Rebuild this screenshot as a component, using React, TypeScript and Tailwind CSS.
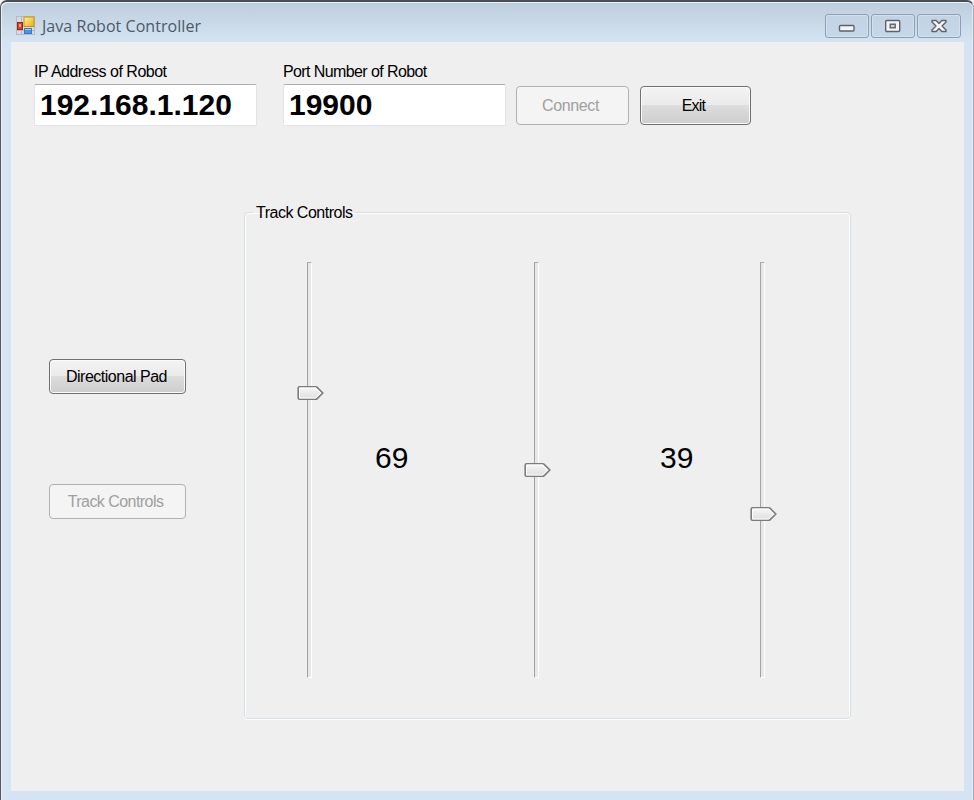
import type { ReactNode } from "react";

function FormIcon() {
  return (
    <svg width="20" height="20" viewBox="0 0 20 20" className="shrink-0">
      <defs>
        <linearGradient id="gold" x1="0" y1="0" x2="1" y2="1">
          <stop offset="0" stopColor="#fff0a0" />
          <stop offset="1" stopColor="#eeb000" />
        </linearGradient>
      </defs>
      <rect x="0.5" y="0.5" width="18" height="18" fill="#d5dae2" stroke="#b4bac6" />
      <path d="M5.5 1V18M1 14.5H18" stroke="#b4bac6" />
      <rect x="8" y="1" width="10" height="9.5" fill="url(#gold)" stroke="#c8930c" />
      <rect x="1.5" y="6.5" width="5" height="7" fill="#d8412e" stroke="#9c2418" />
      <rect x="3" y="8" width="2" height="3" fill="#f2a090" />
      <rect x="8.5" y="12.5" width="7" height="5" fill="#4c92e8" stroke="#3a78cc" />
      <path d="M9 13.5H15" stroke="#9cc8ff" />
    </svg>
  );
}

function CaptionButton({ label, children }: { label: string; children: ReactNode }) {
  return (
    <button
      aria-label={label}
      className="flex h-6 w-11 items-center justify-center rounded-[3px] border border-[#8b9fb9] bg-gradient-to-b from-[#c3d3e3] to-[#c6d7e9] shadow-[inset_0_0_0_1px_#d3e0ed]"
    >
      <svg width="20" height="16" viewBox="0 0 20 16" fill="#f5f5f5" stroke="#5d626c" strokeWidth="1.4">
        {children}
      </svg>
    </button>
  );
}

function Field({ label, value, labelClass }: { label: string; value: string; labelClass: string }) {
  return (
    <div className="w-[223px]">
      <div className={`h-[22px] text-base leading-5 whitespace-nowrap ${labelClass}`}>{label}</div>
      <div className="flex h-[42px] items-center rounded-[2px] border border-[#e2e3ea] border-t-[#abadb3] bg-white pl-[5px] text-[30px] leading-none font-bold">
        {value}
      </div>
    </div>
  );
}

function PushButton({ children, className, disabled }: { children: ReactNode; className: string; disabled?: boolean }) {
  const look = disabled
    ? "border-[#adb2b5] bg-[#f4f4f4] text-[#a0a0a0]"
    : "border-[#707070] bg-[linear-gradient(#f3f3f3_0%,#ebebeb_48%,#dddddd_50%,#cdcdcd_100%)] shadow-[inset_0_0_0_1px_#fbfbfb] text-black";
  return (
    <button disabled={disabled} className={`flex items-center justify-center rounded-[4px] border text-base whitespace-nowrap ${look} ${className}`}>
      {children}
    </button>
  );
}

function TrackBar({ thumbTop }: { thumbTop: number }) {
  return (
    <div className="relative h-[416px] w-[5px] shrink-0 border-t border-r border-b border-l-[1.5px] border-t-[#b0b0b0] border-r-white border-b-white border-l-[#a2a2a2] bg-[#e7e7e7]">
      <svg width="27" height="17" viewBox="0 0 27 17" className="absolute -left-[11px]" style={{ top: thumbTop }}>
        <defs>
          <linearGradient id="thumb" x1="0" y1="0" x2="0" y2="1">
            <stop offset="0" stopColor="#f8f8f8" />
            <stop offset="1" stopColor="#dddddd" />
          </linearGradient>
        </defs>
        <path d="M2.5 1.7H18.5Q19.5 1.7 20.2 2.4L25.8 8L20.2 13.6Q19.5 14.3 18.5 14.3H2.5Q1.2 14.3 1.2 13V3Q1.2 1.7 2.5 1.7Z" fill="url(#thumb)" stroke="#7c7c7c" strokeWidth="1.6" />
        <path d="M2.5 3H18.7L23.8 8L18.7 13H2.5Z" fill="none" stroke="#fff" />
      </svg>
    </div>
  );
}

export default function App() {
  return (
    <div className="h-[800px] w-[974px] bg-[#f4f4f4] font-['Liberation_Sans',Arial,sans-serif] text-black">
      <div className="flex h-[800px] flex-col rounded-t-[7px] border-t-2 border-r border-l border-t-[#4b4e54] border-r-[#a6abb8] border-l-[#53565c] bg-[linear-gradient(#bccddd_0px,#d5e4f2_40px,#d5e4f2_100%)] pr-[9px] pb-[9px] pl-[10px] shadow-[inset_1px_1px_0_#eaf0f6,inset_-1px_0_0_#e0e9f2]">
        <header className="flex h-10 shrink-0 items-start pr-[3px]">
          <div className="flex items-center gap-[6px] pt-[14px] pl-[5px]">
            <FormIcon />
            <h1 className="-mt-px font-['Open_Sans','Noto_Sans',sans-serif] text-base leading-5 tracking-[0.05px] text-[#4c5a68]">Java Robot Controller</h1>
          </div>
          <div className="mt-3 ml-auto flex gap-[2px]">
            <CaptionButton label="Minimize">
              <rect x="2.5" y="7.5" width="14.5" height="5.5" rx="1" />
            </CaptionButton>
            <CaptionButton label="Maximize">
              <rect x="2.7" y="2.5" width="14" height="11" rx="1" />
              <rect x="7.2" y="6.2" width="5" height="3.6" fill="#c4d5e6" />
            </CaptionButton>
            <CaptionButton label="Close">
              <path d="M3 2.5H7.2L10 5.5L12.8 2.5H17V4L13 8L17 12V13.5H12.8L10 10.5L7.2 13.5H3V12L7 8L3 4Z" strokeLinejoin="round" />
            </CaptionButton>
          </div>
        </header>

        <main className="flex-1 bg-[#efefef]">
          <div className="flex h-40 pt-5 pl-[23px]">
            <Field label="IP Address of Robot" value="192.168.1.120" labelClass="tracking-[-0.5px]" />
            <div className="ml-[26px] flex">
              <Field label="Port Number of Robot" value="19900" labelClass="tracking-[-0.6px]" />
            </div>
            <div className="ml-[10px] flex gap-[11px] pt-6">
              <PushButton disabled className="h-[39px] w-[113px] pr-1 tracking-[-0.35px]">Connect</PushButton>
              <PushButton className="h-[39px] w-[111px] pr-1 tracking-[-0.8px]">Exit</PushButton>
            </div>
          </div>

          <div className="flex pl-[38px]">
            <div className="flex w-[195px] flex-col gap-[90px] pt-[157px]">
              <PushButton className="h-[35px] w-[137px] pt-px pr-0.5 tracking-[-0.5px]">Directional Pad</PushButton>
              <PushButton disabled className="h-[35px] w-[137px] pt-px pr-1 tracking-[-0.55px]">Track Controls</PushButton>
            </div>
            <fieldset className="h-[517px] w-[607px] min-w-0 rounded-[4px] border border-[#d5dfe5] shadow-[inset_1px_0_0_#fff,inset_-1px_0_0_#fff,inset_0_1px_0_#fff,0_1px_0_#fff]">
              <legend className="ml-2 h-5 px-[3px] text-base leading-[22px] tracking-[-0.5px]">Track Controls</legend>
              <div className="flex pt-[40px] pl-[62px]">
                <TrackBar thumbTop={122} />
                <div className="w-[222px] pt-[180px] pl-[63px] text-[30px] leading-8">69</div>
                <TrackBar thumbTop={199} />
                <div className="w-[221px] pt-[180px] pl-[121px] text-[30px] leading-8">39</div>
                <TrackBar thumbTop={243} />
              </div>
            </fieldset>
          </div>
        </main>
      </div>
    </div>
  );
}
